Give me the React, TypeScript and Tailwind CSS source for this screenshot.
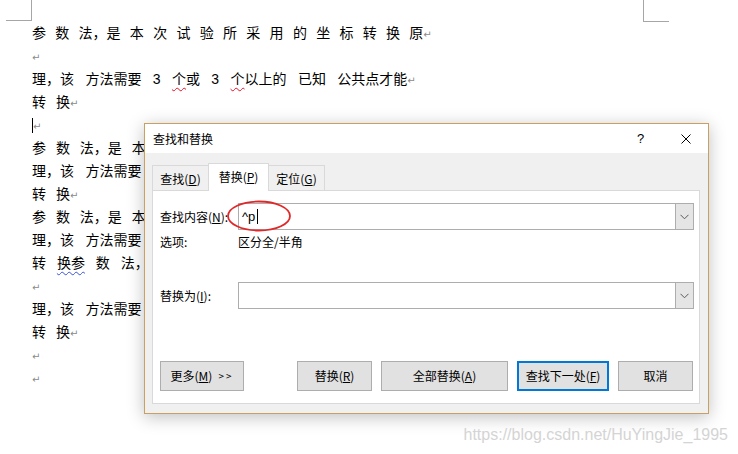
import React from 'react'

const docFont = "font-['Liberation_Sans','Noto_Sans_CJK_SC',sans-serif]"
const uiFont = "font-['Noto_Sans_CJK_SC','Liberation_Sans',sans-serif]"

function Mark() {
  return <span className="font-['DejaVu_Sans',sans-serif] text-[10px] text-[#8a8a8a]">↵</span>
}

function Red({ children }: { children: React.ReactNode }) {
  return (
    <span className="underline decoration-wavy decoration-[#e81123] decoration-1 underline-offset-[3px]">
      {children}
    </span>
  )
}

function Line({ children, ws = '' }: { children?: React.ReactNode; ws?: string }) {
  return <div className={`h-[23px] whitespace-nowrap ${ws}`}>{children}</div>
}

function Document() {
  return (
    <div className={`pl-[32px] pt-[22px] text-[14px] leading-[23px] text-black ${docFont}`}>
      <Line ws="[word-spacing:5.4px]">参 数 法，是 本 次 试 验 所 采 用 的 坐 标 转 换 原<Mark /></Line>
      <Line><Mark /></Line>
      <Line ws="[word-spacing:7.5px]">
        理，该 方法需要 3 <Red>个</Red>或 3 <Red>个</Red>以上的 已知 公共点才能<Mark />
      </Line>
      <Line ws="[word-spacing:6px]">转 换<Mark /></Line>
      <Line>
        <span className="inline-block w-[1px] h-[15px] bg-black align-[-3px]" />
        <Mark />
      </Line>
      <Line ws="[word-spacing:6px]">参 数 法，是 本 次 试 验 所 采 用 的 坐 标 转 换 原<Mark /></Line>
      <Line ws="[word-spacing:7.5px]">理，该 方法需要 3 个或 3 个以上的 已知 公共点才能<Mark /></Line>
      <Line ws="[word-spacing:6px]">转 换<Mark /></Line>
      <Line ws="[word-spacing:6px]">参 数 法，是 本 次 试 验 所 采 用 的 坐 标 转 换 原<Mark /></Line>
      <Line ws="[word-spacing:7.5px]">理，该 方法需要 3 个或 3 个以上的 已知 公共点才能<Mark /></Line>
      <Line ws="[word-spacing:7px]">
        转 <span className="underline decoration-wavy decoration-[#3a52d8] decoration-1 underline-offset-[3px]">换参</span> 数 法，是 本 次 试 验 所 采 用
      </Line>
      <Line><Mark /></Line>
      <Line ws="[word-spacing:7.5px]">理，该 方法需要 3 个或 3 个以上的 已知 公共点才能<Mark /></Line>
      <Line ws="[word-spacing:6px]">转 换<Mark /></Line>
      <Line><Mark /></Line>
      <Line><Mark /></Line>
    </div>
  )
}

function Chevron() {
  return (
    <svg width="9" height="6" viewBox="0 0 9 6">
      <polyline points="0.5,0.8 4.5,4.8 8.5,0.8" fill="none" stroke="#5a5a5a" strokeWidth="1" />
    </svg>
  )
}

function Combo({ children }: { children?: React.ReactNode }) {
  return (
    <div className="w-[456px] h-[27px] border border-[#adadad] bg-white flex items-center">
      <div className="flex-1 flex items-center pl-[3px] font-['Liberation_Sans',sans-serif] text-[13px] leading-[15px]">
        {children}
      </div>
      <div className="w-[18px] h-full bg-[#e5e5e5] border-l border-[#adadad] flex items-center justify-center">
        <Chevron />
      </div>
    </div>
  )
}

function Btn({ w, focus, children }: { w: string; focus?: boolean; children: React.ReactNode }) {
  return (
    <div
      className={`${w} h-[30px] bg-[#e1e1e1] flex items-center justify-center text-[12px] leading-[16px] ${
        focus ? 'border-2 border-[#0078d7]' : 'border border-[#adadad]'
      }`}
    >
      {children}
    </div>
  )
}

function Dialog() {
  return (
    <div
      className={`absolute left-[144px] top-[123px] w-[565px] h-[291px] border border-[#c9a063] bg-[#f0f0f0] shadow-[0_3px_16px_rgba(0,0,0,0.25)] text-black leading-[16px] ${uiFont}`}
    >
      {/* title bar */}
      <div className="h-[29px] bg-white flex items-center pl-[8px]">
        <span className="text-[12px]">查找和替换</span>
        <div className="ml-auto w-[45px] h-full flex items-center justify-center font-['Liberation_Sans',sans-serif] text-[13px]">
          ?
        </div>
        <div className="w-[45px] h-full flex items-center justify-center">
          <svg width="10" height="10" viewBox="0 0 10 10">
            <path d="M0.5 0.5 L9.5 9.5 M9.5 0.5 L0.5 9.5" stroke="#000" strokeWidth="1" />
          </svg>
        </div>
      </div>

      <div className="pl-[7px] pt-[10px]">
        {/* tabs */}
        <div className="flex items-end h-[27px] text-[12px]">
          <div className="w-[56px] h-[25px] border-l border-t border-[#d9d9d9] flex items-center justify-center pt-[1px]">
            查找(<span className="underline">D</span>)
          </div>
          <div className="relative z-10 w-[61px] h-[28px] mb-[-1px] bg-white border-l border-r border-t border-[#d9d9d9] flex items-center justify-center pb-[2px]">
            替换(<span className="underline">P</span>)
          </div>
          <div className="w-[56px] h-[25px] border-r border-t border-[#d9d9d9] flex items-center justify-center pt-[1px]">
            定位(<span className="underline">G</span>)
          </div>
        </div>

        {/* panel */}
        <div className="relative w-[548px] h-[214px] bg-white border border-[#d9d9d9] pl-[7px] pr-[5px] text-[12px]">
          <div className="mt-[12px] h-[27px] flex items-center">
            <span className="w-[78px]">
              查找内容(<span className="underline">N</span>):
            </span>
            <Combo>
              <span>^p</span>
              <span className="ml-[2px] w-[1px] h-[15px] bg-black" />
            </Combo>
          </div>
          <div className="mt-[4px] h-[15px] flex items-center">
            <span className="w-[78px]">选项:</span>
            <span>区分全/半角</span>
          </div>
          <div className="mt-[33px] h-[27px] flex items-center">
            <span className="w-[78px]">
              替换为(<span className="underline">I</span>):
            </span>
            <Combo />
          </div>
          <div className="mt-[52px] flex mr-[1px]">
            <Btn w="w-[84px]">
              更多(<span className="underline">M</span>)
              <span className="ml-[6px] text-[10px] tracking-[2px]">&gt;&gt;</span>
            </Btn>
            <div className="ml-auto flex gap-[9px]">
              <Btn w="w-[75px]">
                替换(<span className="underline">R</span>)
              </Btn>
              <Btn w="w-[127px]">
                全部替换(<span className="underline">A</span>)
              </Btn>
              <Btn w="w-[92px]" focus>
                查找下一处(<span className="underline">F</span>)
              </Btn>
              <Btn w="w-[75px]">取消</Btn>
            </div>
          </div>

          {/* red annotation ellipse */}
          <svg className="absolute left-[72px] top-[8px]" width="68" height="34" viewBox="0 0 68 34">
            <ellipse cx="34" cy="17" rx="31" ry="14.5" fill="none" stroke="#e02828" strokeWidth="1.8" />
          </svg>
        </div>
      </div>
    </div>
  )
}

export default function App() {
  return (
    <div className="relative w-[738px] h-[454px] overflow-hidden bg-white">
      {/* page corner marks */}
      <div className="absolute left-[6px] top-0 w-[26px] h-[21px] border-r border-b border-[#a6a6a6]" />
      <div className="absolute left-[643px] top-0 w-[26px] h-[22px] border-l border-b border-[#a6a6a6]" />

      <Document />
      <Dialog />

      <div className="absolute right-[10px] top-[426px] font-['Liberation_Sans',sans-serif] text-[16px] leading-[18px] text-[#d4d4d4]">
        https://blog.csdn.net/HuYingJie_1995
      </div>
    </div>
  )
}
